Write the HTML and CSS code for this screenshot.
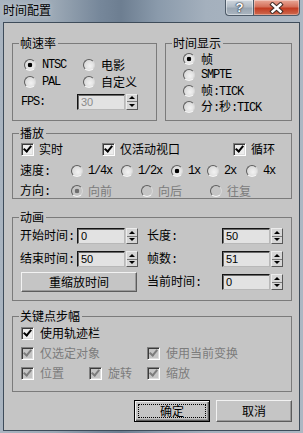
FILE: index.html
```html
<!DOCTYPE html>
<html lang="zh-CN">
<head>
    <meta charset="UTF-8">
    <meta name="viewport" content="width=device-width, initial-scale=1.0">
    <title>时间配置</title>
    <link rel="stylesheet" href="styles.css">
</head>
<body>

<div class="window">
    <div class="titlebar">
        <span class="title">时间配置</span>
        <div class="caption">
            <span class="cap-btn help">?</span>
            <span class="cap-btn close">
                <svg width="15" height="12" viewBox="0 0 15 12">
                    <path d="M3.5 2.5 L11.5 9.5 M11.5 2.5 L3.5 9.5" stroke="#402c27" stroke-width="4.4" stroke-linecap="square" fill="none"/>
                    <path d="M3.5 2.5 L11.5 9.5 M11.5 2.5 L3.5 9.5" stroke="#fff" stroke-width="2.4" stroke-linecap="square" fill="none"/>
                </svg>
            </span>
        </div>
    </div>

    <div class="client">
        <div class="top-row">
            <fieldset class="group rate">
                <legend>帧速率</legend>
                <div class="rate-grid">
                    <span class="opt"><span class="radio on"></span><span class="en">NTSC</span></span>
                    <span class="opt"><span class="radio"></span><span>电影</span></span>
                    <span class="opt"><span class="radio"></span><span class="en">PAL</span></span>
                    <span class="opt"><span class="radio"></span><span>自定义</span></span>
                </div>
                <div class="fps-row">
                    <span class="fps-label en">FPS:</span>
                    <span class="spin">
                        <span class="field disabled">30</span>
                        <span class="arrows"><span class="up"></span><span class="down"></span></span>
                    </span>
                </div>
            </fieldset>

            <fieldset class="group display">
                <legend>时间显示</legend>
                <div class="display-list">
                    <span class="opt"><span class="radio on"></span><span>帧</span></span>
                    <span class="opt"><span class="radio"></span><span class="en">SMPTE</span></span>
                    <span class="opt"><span class="radio"></span><span>帧<span class="en">:TICK</span></span></span>
                    <span class="opt"><span class="radio"></span><span>分<span class="en">:</span>秒<span class="en">:TICK</span></span></span>
                </div>
            </fieldset>
        </div>

        <fieldset class="group playback">
            <legend>播放</legend>
            <div class="check-row">
                <span class="opt"><span class="check on"></span><span>实时</span></span>
                <span class="opt"><span class="check on"></span><span>仅活动视口</span></span>
                <span class="opt"><span class="check on"></span><span>循环</span></span>
            </div>
            <div class="speed-row">
                <span class="row-label">速度<span class="en">:</span></span>
                <span class="opt"><span class="radio"></span><span class="en">1/4x</span></span>
                <span class="opt"><span class="radio"></span><span class="en">1/2x</span></span>
                <span class="opt"><span class="radio on"></span><span class="en">1x</span></span>
                <span class="opt"><span class="radio"></span><span class="en">2x</span></span>
                <span class="opt"><span class="radio"></span><span class="en">4x</span></span>
            </div>
            <div class="dir-row">
                <span class="row-label">方向<span class="en">:</span></span>
                <span class="opt off"><span class="radio on"></span><span>向前</span></span>
                <span class="opt off"><span class="radio"></span><span>向后</span></span>
                <span class="opt off"><span class="radio"></span><span>往复</span></span>
            </div>
        </fieldset>

        <fieldset class="group anim">
            <legend>动画</legend>
            <div class="anim-grid">
                <span class="row-label">开始时间<span class="en">:</span></span>
                <span class="spin">
                    <span class="field">0</span>
                    <span class="arrows"><span class="up"></span><span class="down"></span></span>
                </span>
                <span class="row-label">长度<span class="en">:</span></span>
                <span class="spin">
                    <span class="field">50</span>
                    <span class="arrows"><span class="up"></span><span class="down"></span></span>
                </span>

                <span class="row-label">结束时间<span class="en">:</span></span>
                <span class="spin">
                    <span class="field">50</span>
                    <span class="arrows"><span class="up"></span><span class="down"></span></span>
                </span>
                <span class="row-label">帧数<span class="en">:</span></span>
                <span class="spin">
                    <span class="field">51</span>
                    <span class="arrows"><span class="up"></span><span class="down"></span></span>
                </span>

                <span class="btn rescale">重缩放时间</span>
                <span class="row-label">当前时间<span class="en">:</span></span>
                <span class="spin">
                    <span class="field">0</span>
                    <span class="arrows"><span class="up"></span><span class="down"></span></span>
                </span>
            </div>
        </fieldset>

        <fieldset class="group keys">
            <legend>关键点步幅</legend>
            <div class="keys-grid">
                <span class="opt wide"><span class="check on"></span><span>使用轨迹栏</span></span>
                <span class="opt off span2"><span class="check on"></span><span>仅选定对象</span></span>
                <span class="opt off"><span class="check on"></span><span>使用当前变换</span></span>
                <span class="opt off"><span class="check on"></span><span>位置</span></span>
                <span class="opt off"><span class="check on"></span><span>旋转</span></span>
                <span class="opt off"><span class="check on"></span><span>缩放</span></span>
            </div>
        </fieldset>

        <div class="buttons">
            <span class="btn default"><span class="focus">确定</span></span>
            <span class="btn">取消</span>
        </div>
    </div>
</div>

</body>
</html>
```

FILE: styles.css
```css
* {
    box-sizing: border-box;
}
body {
    margin: 0;
    font: 12px/12px "Noto Sans CJK SC", sans-serif;
    color: #000;
}
.en {
    font: 12px/12px "Liberation Mono", monospace;
    letter-spacing: -1.2px;
}

/* window frame */
.window {
    width: 303px;
    height: 433px;
    padding: 0 3px 2px;
    display: flex;
    flex-direction: column;
    background: linear-gradient(90deg, #a9b4c0 0%, #9ba8b5 18%, #76879a 33%, #6d7e91 40%, #8a9aab 52%, #a4b0bd 68%, #acb7c3 100%);
}
.titlebar {
    height: 22px;
    flex: none;
    display: flex;
    justify-content: space-between;
    align-items: flex-start;
}
.title {
    margin-top: 4px;
    text-shadow: 0 0 5px rgba(255, 255, 255, 0.5);
}
.caption {
    display: flex;
    height: 16px;
}
.cap-btn {
    height: 16px;
    display: flex;
    align-items: center;
    justify-content: center;
    border: 1px solid #4d5a68;
    border-top: none;
}
.help {
    width: 28px;
    border-right: none;
    border-radius: 0 0 0 4px;
    background: linear-gradient(#cfd6dd, #b1bbc5 45%, #9aa6b2 55%, #aab5c0);
    box-shadow: inset 0 0 0 1px rgba(255, 255, 255, 0.45);
    color: #fff;
    font: bold 13px/1 "Liberation Sans", sans-serif;
    text-shadow: 0 0 1px #2a3440, 0 0 1px #2a3440, 0 0 2px #2a3440;
}
.close {
    width: 47px;
    border-radius: 0 0 4px 0;
    background: linear-gradient(#e9a898, #d4705a 45%, #c23c22 55%, #cf6a4f);
    box-shadow: inset 0 0 0 1px rgba(255, 255, 255, 0.35);
}

/* dialog body */
.client {
    flex: 1;
    background: #c5c5c5;
    border: 1px solid #3e4c5a;
    padding: 14px 7px 0 8px;
    display: flex;
    flex-direction: column;
}
.group {
    margin: 0;
    padding: 0 6px;
    min-width: 0;
    border: 1px solid #7b7b7b;
}
.group legend {
    padding: 0 2px 0 1px;
    line-height: 12px;
}
.top-row {
    display: flex;
    gap: 8px;
}
.opt {
    display: flex;
    align-items: center;
    gap: 6px;
    white-space: nowrap;
}
.opt.off {
    color: #7c7c7c;
}
.row-label {
    white-space: nowrap;
}

/* radio buttons and checkboxes */
.radio {
    flex: none;
    width: 12px;
    height: 12px;
    border-radius: 50%;
    border: 1px solid;
    border-color: #5e5e5e #d8d8d8 #f4f4f4 #5e5e5e;
    background: radial-gradient(circle at 60% 60%, #f2f2f2, #cfcfcf);
}
.radio.on {
    background: radial-gradient(circle, #000 2px, transparent 2.6px), radial-gradient(circle at 60% 60%, #f2f2f2, #cfcfcf);
}
.off .radio.on {
    background: radial-gradient(circle, #6e6e6e 2px, transparent 2.6px), #c5c5c5;
}
.off .radio {
    background: #c5c5c5;
}
.check {
    flex: none;
    width: 13px;
    height: 13px;
    border: 1px solid;
    border-color: #808080 #fff #fff #808080;
    box-shadow: inset 1px 1px #3a3a3a, inset -1px -1px #dcdcdc;
    background: #ededed;
    display: flex;
    align-items: center;
    justify-content: center;
}
.check.on::after {
    content: "";
    width: 3px;
    height: 6px;
    margin-top: -2px;
    border: solid #000;
    border-width: 0 2px 2px 0;
    transform: rotate(40deg);
}
.off .check {
    background: #c5c5c5;
}
.off .check.on::after {
    border-color: #7c7c7c;
}

/* spinner fields */
.spin {
    display: flex;
    gap: 1px;
}
.field {
    width: 48px;
    height: 16px;
    padding-left: 3px;
    background: #e2e2e2;
    border: 1px solid;
    border-color: #141414 #b8b8b8 #b8b8b8 #141414;
    box-shadow: inset 1px 1px #6a6a6a;
    font: 11px/14px "Liberation Sans", sans-serif;
}
.field.disabled {
    color: #8a8a8a;
}
.arrows {
    width: 12px;
    height: 16px;
    display: flex;
    flex-direction: column;
    border: 1px solid;
    border-color: #ececec #585858 #585858 #ececec;
    background: #d6d6d6;
}
.arrows span {
    flex: 1;
    display: flex;
    align-items: center;
    justify-content: center;
}
.arrows .up {
    border-bottom: 1px solid #7a7a7a;
}
.arrows .up::after {
    content: "";
    border: 3px solid transparent;
    border-top: none;
    border-bottom: 3px solid #000;
}
.arrows .down::after {
    content: "";
    border: 3px solid transparent;
    border-bottom: none;
    border-top: 3px solid #000;
}

/* frame rate */
.rate {
    width: 145px;
    height: 84px;
}
.rate-grid {
    display: grid;
    grid-template-columns: 59px auto;
    grid-auto-rows: 17px;
    margin-top: 7px;
    padding-left: 5px;
}
.fps-row {
    display: flex;
    align-items: center;
    height: 17px;
    margin-top: 3px;
    padding-left: 2px;
}
.fps-label {
    width: 56px;
}

/* time display */
.display {
    width: 127px;
    height: 84px;
}
.display-list {
    display: grid;
    grid-auto-rows: 16px;
    padding: 1.5px 0 0 11px;
}

/* playback */
.playback {
    height: 72px;
    margin-top: 6px;
}
.playback .opt {
    gap: 5px;
}
.check-row {
    display: grid;
    grid-template-columns: 81px 131px auto;
    height: 14px;
    align-items: center;
    margin-top: 3px;
    padding-left: 2px;
}
.speed-row,
.dir-row {
    display: grid;
    height: 14px;
    align-items: center;
    padding-left: 1px;
}
.speed-row {
    grid-template-columns: 51px 50px 50px 36px 39px auto;
    margin-top: 8px;
}
.dir-row {
    grid-template-columns: 51px 70px 69px auto;
    margin-top: 6px;
}

/* animation */
.anim {
    height: 90px;
    margin-top: 12px;
}
.anim-grid {
    display: grid;
    grid-template-columns: 57px 70px 75px 61px;
    grid-template-rows: 16px 16px 16px;
    row-gap: 7px;
    align-items: center;
    margin-top: 5px;
    padding-left: 1px;
}
.btn {
    display: flex;
    align-items: center;
    justify-content: center;
    background: #c5c5c5;
    border: 1px solid;
    border-color: #f2f2f2 #5c5c5c #5c5c5c #f2f2f2;
    box-shadow: inset -1px -1px #9a9a9a;
}
.btn.rescale {
    grid-column: span 2;
    width: 116px;
    height: 20px;
    margin-left: 1px;
}

/* key steps */
.keys {
    height: 82px;
    margin-top: 9px;
}
.keys-grid {
    display: grid;
    grid-template-columns: 68px 58px auto;
    grid-auto-rows: 14px;
    row-gap: 6px;
    align-items: center;
    margin-top: 4px;
    padding-left: 2px;
}
.keys-grid .wide {
    grid-column: span 3;
}
.keys-grid .span2 {
    grid-column: span 2;
}

/* dialog buttons */
.buttons {
    display: flex;
    justify-content: flex-end;
    gap: 6px;
    margin-top: 8px;
}
.buttons .btn {
    width: 76px;
    height: 22px;
}
.btn.default {
    border: 1px solid #000;
    box-shadow: inset 1px 1px #f2f2f2, inset -1px -1px #5c5c5c, inset -2px -2px #9a9a9a;
    padding: 3px;
}
.focus {
    flex: 1;
    align-self: stretch;
    display: flex;
    align-items: center;
    justify-content: center;
    border: 1px dotted #000;
}
```
